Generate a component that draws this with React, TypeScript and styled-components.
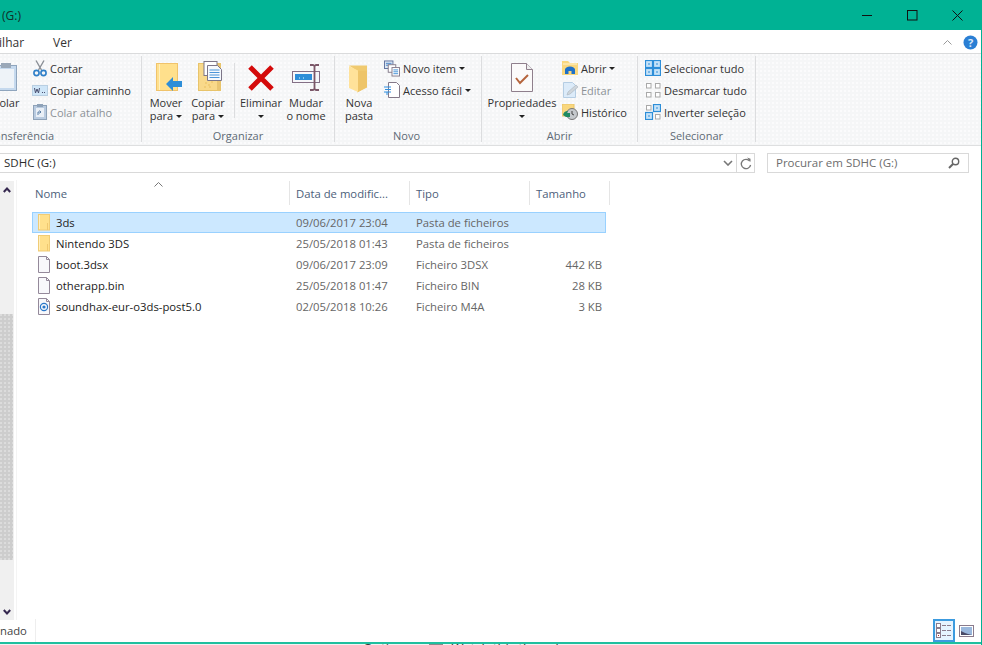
import React from "react";
import styled, { createGlobalStyle } from "styled-components";

const Global = createGlobalStyle`
  html, body { margin: 0; padding: 0; background: #fff; overflow: hidden; }
  body { font-family: "Open Sans", "Noto Sans", "Liberation Sans", sans-serif; font-size: 11.3px; color: #2b2b2b; }
`;

const dots = `radial-gradient(circle at 1px 1px, #fbfbfc 0.8px, transparent 1px)`;

const Window = styled.div`
  width: 982px; height: 645px; display: flex; flex-direction: column; overflow: hidden; background: #fff; position: relative;
`;
const TitleBar = styled.header`
  height: 30px; flex: none; background: #00b294; display: flex; align-items: center; padding: 0 19px 0 2px; color: #10302a; font-size: 12px;
`;
const TitleText = styled.span` flex: 1; `;
const WinControls = styled.div` display: flex; align-items: center; width: 101px; justify-content: space-between; `;
const TabRow = styled.nav`
  flex: none; display: flex; align-items: center; border-bottom: 1px solid #dadbdc; padding: 1px 4px 0 0; font-size: 12px; color: #333; box-sizing: content-box; height: 22px;
`;
const CutTab = styled.span` margin-left: -24px; width: 77px; flex: none; `;
const Tab = styled.span` flex: 1; `;
const RibbonCollapse = styled.span` display: flex; margin-right: 11px; `;
const Ribbon = styled.section`
  height: 91px; flex: none; display: flex; font-size: 11px; background-color: #f5f6f7; background-image: ${dots}; background-size: 4px 4px; border-bottom: 1px solid #dedfe0; box-sizing: content-box;
`;
const Group = styled.div<{ $w: number; $ml?: number }>`
  width: ${p => p.$w}px; margin-left: ${p => p.$ml ?? 0}px; flex: none; box-sizing: border-box; border-right: 1px solid #dcdddf; margin-top: 2px; margin-bottom: 3px; display: flex; flex-direction: column;
`;
const GroupBody = styled.div<{ $end?: boolean; $pl?: number }>`
  flex: 1; display: flex; justify-content: ${p => (p.$end ? "flex-end" : "flex-start")}; padding-left: ${p => p.$pl ?? 0}px; min-height: 0;
`;
const GroupLabel = styled.div<{ $pr?: number }>`
  height: 12px; flex: none; text-align: center; color: #5e6a75; font-size: 11px; line-height: 12px; white-space: nowrap; padding-right: ${p => p.$pr ?? 0}px;
`;
const LargeBtn = styled.div<{ $w: number }>`
  width: ${p => p.$w}px; flex: none; display: flex; flex-direction: column; align-items: center; padding-top: 5px; text-align: center; line-height: 13px; color: #333; white-space: nowrap;
`;
const LargeIcon = styled.div` height: 34px; margin-bottom: 1px; display: flex; align-items: flex-start; justify-content: center; flex: none; `;
const Line = styled.span` display: flex; align-items: center; justify-content: center; gap: 3px; height: 13px; flex: none; `;
const Caret = styled.i`
  display: inline-block; width: 0; height: 0; border-left: 3px solid transparent; border-right: 3px solid transparent; border-top: 3px solid #222; margin-top: 1px;
`;
const VSep = styled.div` width: 1px; height: 55px; margin: 7px 3px 0 5px; background: #dcdddf; flex: none; `;
const SmallCol = styled.div<{ $w?: number; $ml?: number }>`
  ${p => (p.$w ? `width:${p.$w}px;flex:none;` : "")} margin-left: ${p => p.$ml ?? 0}px; display: flex; flex-direction: column; padding-top: 1px;
`;
const SmallBtn = styled.div<{ $off?: boolean; $gap?: number }>`
  height: 22px; flex: none; display: flex; align-items: center; gap: ${p => p.$gap ?? 3}px; color: ${p => (p.$off ? "#8d9297" : "#333")}; white-space: nowrap;
`;
const SmallIcon = styled.span` width: 16px; height: 17px; display: flex; align-items: center; justify-content: center; flex: none; `;
const AddressRow = styled.div`
  height: 34px; box-sizing: border-box; flex: none; display: flex; align-items: flex-start; padding: 7px 13px 0 0; font-size: 11.5px;
`;
const AddressBox = styled.div`
  width: 755px; height: 20px; box-sizing: border-box; border: 1px solid #d9d9d9; border-left: 0; display: flex; align-items: center; padding-left: 4px; color: #2b2b2b; margin-right: 12px; flex: none;
`;
const AddressText = styled.span` flex: 1; padding-bottom: 1px; `;
const AddressChevron = styled.span` width: 14px; display: flex; justify-content: center; margin-right: 1px; `;
const RefreshCell = styled.span` width: 17px; height: 100%; border-left: 1px solid #d9d9d9; display: flex; align-items: center; justify-content: center; `;
const SearchBox = styled.div`
  flex: 1; height: 20px; box-sizing: border-box; border: 1px solid #d9d9d9; display: flex; align-items: center; padding: 0 8px 1px; color: #6d6d6d; justify-content: space-between;
`;
const Main = styled.main` flex: 1; display: flex; min-height: 0; `;
const ScrollBar = styled.div`
  width: 14px; flex: none; background: #f0f0f0; margin-top: 1px; display: flex; flex-direction: column; margin-right: 2px;
`;
const ScrollArrow = styled.div<{ $h: number }>` height: ${p => p.$h}px; display: flex; align-items: center; justify-content: center; flex: none; `;
const ScrollThumb = styled.div`
  width: 13px; height: 246px; margin-top: 116px; background-color: #cdcdcd; background-image: radial-gradient(circle at 1px 1px, #dcdcdc 0.7px, transparent 1px); background-size: 4px 4px; flex: none;
`;
const ScrollSpacer = styled.div` flex: 1; `;
const ListPane = styled.div` flex: 1; border-left: 1px solid #f4f4f4; padding-left: 15px; padding-top: 1px; `;
const ColGrid = `display: grid; grid-template-columns: 258px 120px 120px 76px;`;
const Head = styled.div`
  display: grid; grid-template-columns: 258px 120px 120px 80px; height: 24px; position: relative; color: #4c607a; margin-bottom: 7px;
`;
const HeadCell = styled.div<{ $pl?: number }>`
  box-sizing: border-box; border-right: 1px solid #e5e5e5; padding-left: ${p => p.$pl ?? 6}px; line-height: 26px; white-space: nowrap; overflow: hidden;
`;
const SortCaret = styled.span` position: absolute; left: 122px; top: 1px; display: flex; `;
const Row = styled.div<{ $sel?: boolean }>`
  ${ColGrid} height: 21px; box-sizing: border-box; align-items: center; border: 1px solid ${p => (p.$sel ? "#99d1ff" : "transparent")}; background: ${p => (p.$sel ? "#cce8ff" : "transparent")}; width: 574px; color: #666; padding-bottom: 1px;
`;
const NameCell = styled.div` display: flex; align-items: center; gap: 6px; padding-left: 5px; color: #222; white-space: nowrap; `;
const Cell = styled.div` padding: 0 3px 0 5px; white-space: nowrap; `;
const SizeCell = styled.div` padding-right: 5px; text-align: right; white-space: nowrap; `;
const StatusBar = styled.footer`
  height: 23px; flex: none; display: flex; align-items: center; color: #444; padding-right: 8px; margin-top: -1px;
`;
const StatusText = styled.span` width: 36px; border-right: 1px solid #eee; height: 100%; line-height: 23px; flex: none; box-sizing: border-box; `;
const ViewSpace = styled.span` flex: 1; `;
const ViewOn = styled.span`
  width: 22px; height: 23px; box-sizing: border-box; border: 2px solid #3c9bdf; background: #e5f3ff; display: flex; align-items: center; justify-content: center; margin-right: 4px;
`;
const ViewOff = styled.span` display: flex; width: 15px; height: 12px; `;
const TealLine = styled.div` height: 2px; flex: none; background: #1fbf9f; `;
const RightEdge = styled.div` position: absolute; right: 0; top: 0; bottom: 0; width: 1px; background: #00b294; `;
const CutPage = styled.div`
  height: 1px; flex: none; overflow: hidden; display: flex; padding-left: 363px; font-size: 13px; line-height: 14px; color: #333; background: #f2f2f2; align-items: flex-start;
`;
const CutText = styled.span` margin-top: -3px; flex: none; `;
const CutCheck = styled.span` width: 12px; height: 12px; border: 1px solid #8a8a8a; flex: none; margin: 0 8px 0 15px; `;

const Minimize = () => <svg width="11" height="11"><path d="M0 5.5h10" stroke="#111" /></svg>;
const Maximize = () => <svg width="11" height="11"><rect x=".5" y=".5" width="9.5" height="9.5" fill="none" stroke="#111" /></svg>;
const CloseX = () => <svg width="11" height="11"><path d="M.5.5l10 10M10.5.5l-10 10" stroke="#111" fill="none" /></svg>;
const UpChevron = ({ c = "#9a9a9a" }: { c?: string }) => <svg width="9" height="5"><path d="M.5 4.5l4-4 4 4" stroke={c} fill="none" /></svg>;
const Help = () => (
  <svg width="15" height="15">
    <circle cx="7.5" cy="7.5" r="7" fill="#2b7fd4" />
    <text x="7.5" y="11.5" textAnchor="middle" fontSize="11" fontWeight="700" fill="#dbe9f8" fontFamily="Open Sans">?</text>
  </svg>
);
const ClipboardBig = () => (
  <svg width="22" height="30" viewBox="0 -2 22 30">
    <rect x=".5" y="2.5" width="21" height="25" fill="#c5d9ee" stroke="#8fa5bd" />
    <rect x="3" y="6" width="16" height="19" fill="#eef3f8" />
    <rect x="6" y="0" width="10" height="5" fill="#9aa8b8" />
  </svg>
);
const Scissors = () => (
  <svg width="14" height="17" viewBox="0 0 14 17">
    <path d="M3 .5L8.5 10M11 .5L5.5 10" stroke="#8a8f96" strokeWidth="1.4" fill="none" />
    <circle cx="3.5" cy="13" r="2.6" fill="none" stroke="#2f7fc8" strokeWidth="1.6" />
    <circle cx="10.5" cy="13" r="2.6" fill="none" stroke="#2f7fc8" strokeWidth="1.6" />
  </svg>
);
const PathIcon = () => (
  <svg width="16" height="11" viewBox="0 0 16 11">
    <rect x=".5" y=".5" width="15" height="10" fill="#cfe6f8" stroke="#b9cfe2" />
    <path d="M2.5 3l1 5 1.5-4 1.5 4 1-5" stroke="#4a4f70" fill="none" />
    <path d="M10 7.5h1M12 7.5h1" stroke="#4a4f70" />
  </svg>
);
const ShortcutIcon = () => (
  <svg width="14" height="16" viewBox="0 0 14 16">
    <rect x=".5" y="1.5" width="13" height="14" fill="#b9cbe0" stroke="#8ea2b8" />
    <rect x="3" y="4" width="8" height="9" fill="#e9eff6" />
    <path d="M5 11V8h3M6.5 6.5L8 8 6.5 9.5" stroke="#5b7fa5" fill="none" />
    <rect x="4" y="0" width="6" height="3" fill="#8ea2b8" />
  </svg>
);
const MoveIcon = () => (
  <svg width="32" height="33" viewBox="-6 -2 32 33">
    <rect x=".5" y=".5" width="21" height="27" fill="#ffe08c" stroke="#f0c36b" />
    <path d="M3.5 1v26" stroke="#fff0c0" />
    <path d="M10 21l7-7v4h9v6h-9v4z" fill="#2d8ed8" />
  </svg>
);
const CopyIcon = () => (
  <svg width="32" height="31" viewBox="-6 0 32 31">
    <rect x=".5" y="2.5" width="22" height="27" fill="#f9d98a" stroke="#e8c46b" />
    <path d="M19 3v26h3V3z" fill="#e9c572" />
    <rect x="6" y=".5" width="13" height="14" fill="#fff" stroke="#7d7688" />
    <path d="M9.5 4.5h10l4 4v11h-14z" fill="#f6f9fd" stroke="#7d7688" />
    <path d="M11.5 9h10M11.5 11.5h10M11.5 14h10M11.5 16.5h10" stroke="#4b95d8" />
    <g fill="#e7bb5c"><circle cx="8" cy="22" r=".8" /><circle cx="11" cy="24" r=".8" /><circle cx="14" cy="21" r=".8" /><circle cx="12" cy="26" r=".8" /><circle cx="7" cy="26" r=".8" /></g>
  </svg>
);
const DeleteIcon = () => (
  <svg width="26" height="30" viewBox="0 -4 26 30"><path d="M2 2l22 22M24 2L2 24" stroke="#d40a0a" strokeWidth="5" /></svg>
);
const RenameIcon = () => (
  <svg width="30" height="30" viewBox="-1 -3 30 30">
    <rect x=".5" y="7.5" width="27" height="11" fill="#f6f7fa" stroke="#836f85" />
    <rect x="3" y="10" width="17" height="6" fill="#2d8ed8" />
    <path d="M7 14h1M11 14h1" stroke="#dff" />
    <path d="M18 1h3l1.5 1 1.5-1h3M18 26h3l1.5-1 1.5 1h3M22.5 2v23" stroke="#7b5768" strokeWidth="1.8" fill="none" />
  </svg>
);
const NewFolderIcon = () => (
  <svg width="20" height="32" viewBox="0 -4 20 32">
    <path d="M0 .5h18v22l-10 5V6z" fill="#f0ca70" />
    <path d="M0 1l9 4.5V27l-9-4z" fill="#ffe29a" />
    <path d="M9 6h9v16l-9 5z" fill="#eec56a" />
  </svg>
);
const NewItemIcon = () => (
  <svg width="17" height="17" viewBox="0 0 17 17">
    <rect x=".5" y=".5" width="9" height="8" fill="#dfeaf5" stroke="#5e6f9c" />
    <path d="M2 3h6M2 5h6" stroke="#3f7fc5" />
    <rect x="4.5" y="4.5" width="8" height="8" fill="#fff" stroke="#847a8a" />
    <rect x="8.5" y="7.5" width="8" height="9" fill="#fff" stroke="#847a8a" />
    <path d="M10 10h5M10 12h5M10 14h5" stroke="#3f8fd5" />
  </svg>
);
const EasyIcon = () => (
  <svg width="16" height="16" viewBox="0 0 16 16">
    <path d="M4.5.5h8l3 3v12h-11z" fill="#fff" stroke="#837888" />
    <path d="M0 5h7M1 7.5h6M0 10h7M3 10v3" stroke="#2f8fe0" />
  </svg>
);
const PropsIcon = () => (
  <svg width="22" height="31" viewBox="0 -2 22 31">
    <path d="M.5.5h15l6 6v22H.5z" fill="#fbfafa" stroke="#8f7f8c" />
    <path d="M15.5.5v6h6" fill="#eee" stroke="#8f7f8c" />
    <path d="M5 15l4 5 8-8" stroke="#b5643c" strokeWidth="2" fill="none" />
  </svg>
);
const OpenIcon = () => (
  <svg width="16" height="14" viewBox="0 0 16 14">
    <path d="M0 0h6l2 2h8v12H0z" fill="#f9d77e" />
    <path d="M1 3h14" stroke="#fff3cf" />
    <path d="M3 13V8.5a5 3 0 0 1 10 0V13h-3.5V10h-3v3z" fill="#1e70c8" />
  </svg>
);
const EditIcon = () => (
  <svg width="15" height="16" viewBox="0 0 15 16">
    <path d="M.5.5h9l3 3v12H.5z" fill="#dcebf9" stroke="#b5cde3" />
    <path d="M4 13l1-3 8-7 2 2-8 7z" fill="#cfd6dc" stroke="#aab4bd" strokeWidth=".6" />
  </svg>
);
const HistoryIcon = () => (
  <svg width="16" height="16" viewBox="0 0 16 16">
    <path d="M0 0h12v12H0z" fill="#f9d77e" stroke="#e8c46b" />
    <circle cx="10" cy="10" r="5.5" fill="#c4c8cc" stroke="#777" />
    <path d="M10 7v3l2 1" stroke="#444" fill="none" />
    <path d="M1 11a5 5 0 0 1 5-4l-1 2h3v4H4z" fill="#1e8a62" />
  </svg>
);
const Grid4 = ({ on }: { on: boolean[] }) => {
  const onCells = [[0, 0], [8, 0], [0, 8], [8, 8]];
  const offCells = [[1, 1], [10, 1], [1, 10], [10, 10]];
  return (
    <svg width="16" height="16" viewBox="0 0 16 16">
      {on.map((o, i) => {
        const [x, y] = o ? onCells[i] : offCells[i];
        return (
          <g key={i}>
            <rect x={x + 0.5} y={y + 0.5} width={o ? 7 : 4.5} height={o ? 7 : 4.5} fill={o ? "#c5e2f8" : "#fff"} stroke={o ? "#2d8ed8" : "#a9a9a9"} strokeWidth={o ? 1.2 : 1} />
            {o && <rect x={x + 3} y={y + 3} width="2" height="2" fill="#7ab8e8" />}
          </g>
        );
      })}
    </svg>
  );
};
const ChevDown = ({ c = "#777" }: { c?: string }) => <svg width="10" height="6"><path d="M1 1l4 4 4-4" stroke={c} strokeWidth="1.6" fill="none" /></svg>;
const Refresh = () => (
  <svg width="12" height="13" viewBox="0 0 12 13">
    <path d="M9.8 4.2A4.7 4.7 0 1 0 10.6 8" stroke="#777" strokeWidth="1.3" fill="none" />
    <path d="M7 .5l3.5 1.2V5z" fill="#777" />
  </svg>
);
const SearchIcon = () => (
  <svg width="12" height="12" viewBox="0 0 12 12">
    <circle cx="7.5" cy="4.5" r="3.2" fill="none" stroke="#666" strokeWidth="1.4" />
    <path d="M5 7l-4 4" stroke="#666" strokeWidth="2" />
  </svg>
);
const ScrollUp = () => <svg width="8" height="6"><path d="M.8 5L4 1.5 7.2 5" stroke="#35284f" strokeWidth="2" fill="none" /></svg>;
const ScrollDown = () => <svg width="8" height="6"><path d="M.8 1L4 4.5 7.2 1" stroke="#35284f" strokeWidth="2" fill="none" /></svg>;
const FolderRow = () => (
  <svg width="12" height="17" viewBox="0 0 12 17">
    <rect x=".5" y=".5" width="11" height="15.5" fill="#ffe08c" stroke="#f0cc76" />
    <path d="M9.5 9v7" stroke="#f0c870" />
    <path d="M1.5 1v14" stroke="#fff0c4" />
  </svg>
);
const FileRow = ({ m4a }: { m4a?: boolean }) => (
  <svg width="12" height="17" viewBox="0 0 12 17">
    <path d="M.5.5h8l3 3v13H.5z" fill="#f8f8fb" stroke="#94899a" />
    <path d="M8.5.5v3h3" fill="none" stroke="#94899a" />
    {m4a && (
      <>
        <circle cx="6" cy="9" r="3.6" fill="none" stroke="#2a78c9" strokeWidth="1.2" />
        <circle cx="6" cy="9" r="1.6" fill="#2a78c9" />
      </>
    )}
  </svg>
);
const DetailsView = () => (
  <svg width="16" height="17" viewBox="0 0 16 17">
    <rect x=".5" y="1.5" width="4" height="4" fill="#fff" stroke="#8a7b8c" />
    <rect x=".5" y="6.5" width="4" height="4" fill="#fff" stroke="#8a7b8c" />
    <rect x=".5" y="11.5" width="4" height="4" fill="#fff" stroke="#8a7b8c" />
    <rect x="2" y="13" width="1" height="1" fill="#c02020" />
    <path d="M6 3.5h4M11 3.5h4M6 8.5h4M11 8.5h4M6 13.5h4M11 13.5h4" stroke="#8a7b8c" />
  </svg>
);
const PreviewView = () => (
  <svg width="15" height="12" viewBox="0 0 15 12">
    <rect x=".5" y=".5" width="14" height="11" fill="#fff" stroke="#8a7b8c" />
    <rect x="2" y="2" width="11" height="8" fill="#9ab8dd" />
    <path d="M2 10V6l4 2 3 1 4 1z" fill="#4a4a66" />
  </svg>
);

const files = [
  { name: "3ds", date: "09/06/2017 23:04", type: "Pasta de ficheiros", size: "", kind: "folder", sel: true },
  { name: "Nintendo 3DS", date: "25/05/2018 01:43", type: "Pasta de ficheiros", size: "", kind: "folder" },
  { name: "boot.3dsx", date: "09/06/2017 23:09", type: "Ficheiro 3DSX", size: "442 KB", kind: "file" },
  { name: "otherapp.bin", date: "25/05/2018 01:47", type: "Ficheiro BIN", size: "28 KB", kind: "file" },
  { name: "soundhax-eur-o3ds-post5.0", date: "02/05/2018 10:26", type: "Ficheiro M4A", size: "3 KB", kind: "m4a" },
];

export default function App() {
  return (
    <Window>
      <Global />
      <TitleBar>
        <TitleText>(G:)</TitleText>
        <WinControls><Minimize /><Maximize /><CloseX /></WinControls>
      </TitleBar>
      <TabRow>
        <CutTab>Partilhar</CutTab>
        <Tab>Ver</Tab>
        <RibbonCollapse><UpChevron /></RibbonCollapse>
        <Help />
      </TabRow>
      <Ribbon>
        <Group $w={285} $ml={-143}>
          <GroupBody $end>
            <LargeBtn $w={40}>
              <LargeIcon><ClipboardBig /></LargeIcon>
              <Line>Colar</Line>
            </LargeBtn>
            <SmallCol $w={109} $ml={6}>
              <SmallBtn $gap={2}><SmallIcon><Scissors /></SmallIcon>Cortar</SmallBtn>
              <SmallBtn $gap={2}><SmallIcon><PathIcon /></SmallIcon>Copiar caminho</SmallBtn>
              <SmallBtn $off $gap={2}><SmallIcon><ShortcutIcon /></SmallIcon>Colar atalho</SmallBtn>
            </SmallCol>
          </GroupBody>
          <GroupLabel>Área de transferência</GroupLabel>
        </Group>
        <Group $w={193}>
          <GroupBody $pl={3}>
            <LargeBtn $w={42}><LargeIcon><MoveIcon /></LargeIcon><Line>Mover</Line><Line>para<Caret /></Line></LargeBtn>
            <LargeBtn $w={42}><LargeIcon><CopyIcon /></LargeIcon><Line>Copiar</Line><Line>para<Caret /></Line></LargeBtn>
            <VSep />
            <LargeBtn $w={46}><LargeIcon><DeleteIcon /></LargeIcon><Line>Eliminar</Line><Line><Caret /></Line></LargeBtn>
            <LargeBtn $w={44}><LargeIcon><RenameIcon /></LargeIcon><Line>Mudar</Line><Line>o nome</Line></LargeBtn>
          </GroupBody>
          <GroupLabel>Organizar</GroupLabel>
        </Group>
        <Group $w={147}>
          <GroupBody $pl={3}>
            <LargeBtn $w={42}><LargeIcon><NewFolderIcon /></LargeIcon><Line>Nova</Line><Line>pasta</Line></LargeBtn>
            <SmallCol $ml={4}>
              <SmallBtn><SmallIcon><NewItemIcon /></SmallIcon>Novo item<Caret /></SmallBtn>
              <SmallBtn><SmallIcon><EasyIcon /></SmallIcon>Acesso fácil<Caret /></SmallBtn>
            </SmallCol>
          </GroupBody>
          <GroupLabel $pr={3}>Novo</GroupLabel>
        </Group>
        <Group $w={156}>
          <GroupBody $pl={4}>
            <LargeBtn $w={72}><LargeIcon><PropsIcon /></LargeIcon><Line>Propriedades</Line><Line><Caret /></Line></LargeBtn>
            <SmallCol $ml={4}>
              <SmallBtn><SmallIcon><OpenIcon /></SmallIcon>Abrir<Caret /></SmallBtn>
              <SmallBtn $off><SmallIcon><EditIcon /></SmallIcon>Editar</SmallBtn>
              <SmallBtn><SmallIcon><HistoryIcon /></SmallIcon>Histórico</SmallBtn>
            </SmallCol>
          </GroupBody>
          <GroupLabel>Abrir</GroupLabel>
        </Group>
        <Group $w={118}>
          <GroupBody $pl={7}>
            <SmallCol>
              <SmallBtn><SmallIcon><Grid4 on={[true, true, true, true]} /></SmallIcon>Selecionar tudo</SmallBtn>
              <SmallBtn><SmallIcon><Grid4 on={[false, false, false, false]} /></SmallIcon>Desmarcar tudo</SmallBtn>
              <SmallBtn><SmallIcon><Grid4 on={[false, true, true, false]} /></SmallIcon>Inverter seleção</SmallBtn>
            </SmallCol>
          </GroupBody>
          <GroupLabel>Selecionar</GroupLabel>
        </Group>
      </Ribbon>
      <AddressRow>
        <AddressBox>
          <AddressText>SDHC (G:)</AddressText>
          <AddressChevron><ChevDown /></AddressChevron>
          <RefreshCell><Refresh /></RefreshCell>
        </AddressBox>
        <SearchBox>Procurar em SDHC (G:)<SearchIcon /></SearchBox>
      </AddressRow>
      <Main>
        <ScrollBar>
          <ScrollArrow $h={17}><ScrollUp /></ScrollArrow>
          <ScrollThumb />
          <ScrollSpacer />
          <ScrollArrow $h={17}><ScrollDown /></ScrollArrow>
        </ScrollBar>
        <ListPane>
          <Head>
            <HeadCell $pl={3}>Nome</HeadCell>
            <HeadCell>Data de modific...</HeadCell>
            <HeadCell>Tipo</HeadCell>
            <HeadCell>Tamanho</HeadCell>
            <SortCaret><UpChevron c="#777" /></SortCaret>
          </Head>
          {files.map(f => (
            <Row key={f.name} $sel={f.sel}>
              <NameCell>
                {f.kind === "folder" ? <FolderRow /> : <FileRow m4a={f.kind === "m4a"} />}
                {f.name}
              </NameCell>
              <Cell>{f.date}</Cell>
              <Cell>{f.type}</Cell>
              <SizeCell>{f.size}</SizeCell>
            </Row>
          ))}
        </ListPane>
      </Main>
      <StatusBar>
        <StatusText>nado</StatusText>
        <ViewSpace />
        <ViewOn><DetailsView /></ViewOn>
        <ViewOff><PreviewView /></ViewOff>
      </StatusBar>
      <TealLine />
      <CutPage>
        <CutText>Options:</CutText>
        <CutCheck />
        <CutText>Watch this thread...</CutText>
      </CutPage>
      <RightEdge />
    </Window>
  );
}
